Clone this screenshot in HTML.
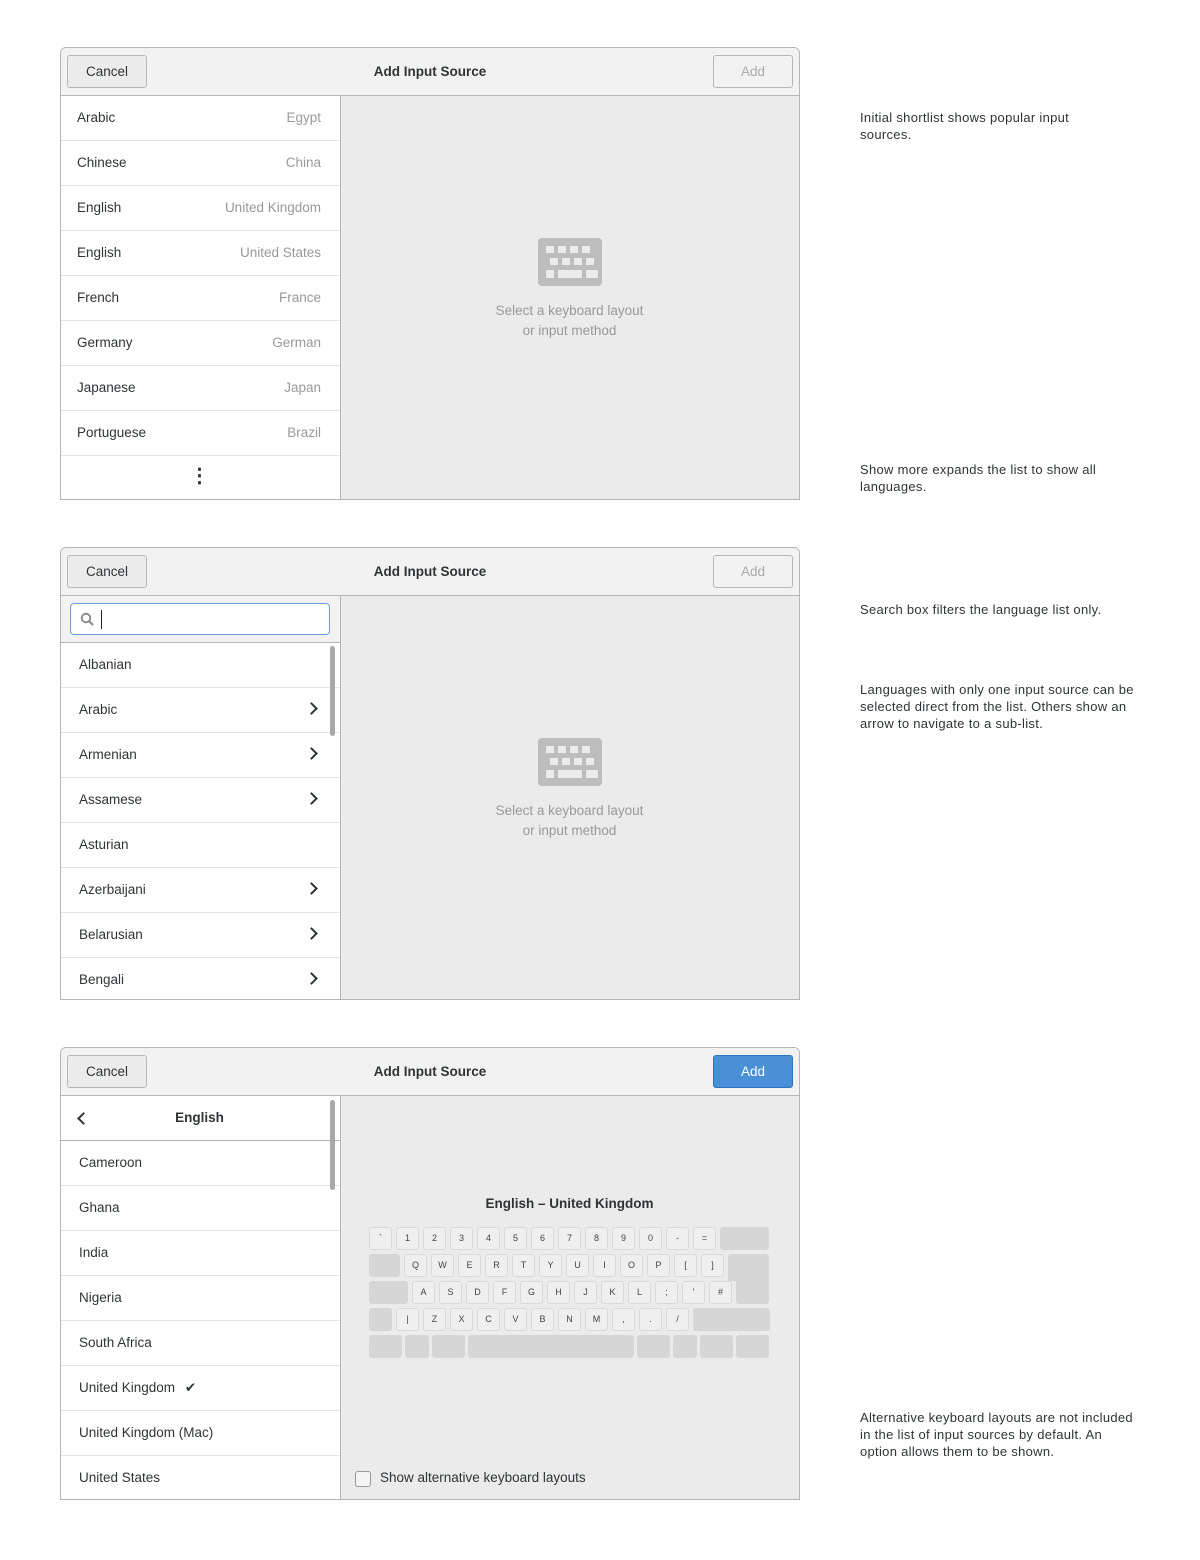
<!DOCTYPE html>
<html><head><meta charset="utf-8"><style>
*{box-sizing:border-box;margin:0;padding:0}
body{width:1200px;height:1560px;background:#fff;font-family:"Liberation Sans",sans-serif;font-size:13.5px;color:#2e3436;position:relative;overflow:hidden}
.dlg{position:absolute;left:60px;width:740px;height:453px;border:1px solid #b6b6b6;border-radius:6px 6px 0 0;overflow:hidden;background:#ebebeb}
.hdr{position:absolute;left:0;top:0;width:100%;height:48px;background:#f2f2f2;border-bottom:1px solid #b6b6b6}
.btn{position:absolute;top:7px;height:33px;width:80px;border:1px solid #b6b6b6;border-radius:3px;background:#ececec;text-align:center;line-height:31px;font-size:13.5px}
.title{position:absolute;left:0;right:0;top:0;line-height:47px;text-align:center;font-weight:bold;font-size:13.5px;padding-right:0}
.left{position:absolute;left:0;top:48px;width:280px;bottom:0;background:#fff;border-right:1px solid #b6b6b6}
.row{height:45px;border-bottom:1px solid #e3e3e3;line-height:44px;padding:0 18px 0 16px;position:relative}
.row .r{position:absolute;right:19px;top:0;color:#999}
.ph{position:absolute;left:279px;right:0;top:48px;bottom:0;text-align:center;color:#999}
.chev{position:absolute;right:24px;top:16px;width:9px;height:9px;border-right:2px solid #2e3436;border-top:2px solid #2e3436;transform:rotate(45deg)}
.sb{position:absolute;left:269px;width:5px;background:#a8a8a8;border-radius:3px}
.note{position:absolute;left:860px;white-space:nowrap;font-size:13px;line-height:17px;letter-spacing:0.3px}
.kb{position:absolute}
.k{position:absolute;height:23px;border:1px solid #d9d9d9;border-radius:3px;background:#efefef;font-size:9px;text-align:center;line-height:21px;color:#444}
.m{background:#d6d6d6;border-color:#d6d6d6}
</style></head><body>

<div class="dlg" style="top:47px">
 <div class="hdr"><div class="title">Add Input Source</div><div class="btn" style="left:6px">Cancel</div><div class="btn" style="left:652px;color:#aaa;background:#f2f2f2">Add</div></div>
 <div class="left">
  <div class="row">Arabic<span class="r">Egypt</span></div>
  <div class="row">Chinese<span class="r">China</span></div>
  <div class="row">English<span class="r">United Kingdom</span></div>
  <div class="row">English<span class="r">United States</span></div>
  <div class="row">French<span class="r">France</span></div>
  <div class="row">Germany<span class="r">German</span></div>
  <div class="row">Japanese<span class="r">Japan</span></div>
  <div class="row">Portuguese<span class="r">Brazil</span></div>
  <div class="row" style="border:0;text-align:center;font-weight:bold;font-size:20px;line-height:40px">&#8942;</div>
 </div>
 <div class="ph"><svg style="position:absolute;left:198px;top:142px" width="64" height="48" viewBox="0 0 64 48"><rect width="64" height="48" rx="4" fill="#bdbdbd"/><g fill="#ebebeb"><rect x="8" y="8" width="8" height="7"/><rect x="20" y="8" width="8" height="7"/><rect x="32" y="8" width="8" height="7"/><rect x="44" y="8" width="8" height="7"/><rect x="12" y="20" width="8" height="7"/><rect x="24" y="20" width="8" height="7"/><rect x="36" y="20" width="8" height="7"/><rect x="48" y="20" width="8" height="7"/><rect x="8" y="32" width="8" height="8"/><rect x="20" y="32" width="24" height="8"/><rect x="48" y="32" width="12" height="8"/></g></svg>
 <div style="position:absolute;left:0;right:0;top:205px;line-height:20px">Select a keyboard layout<br>or input method</div></div>
</div>

<div class="dlg" style="top:547px">
 <div class="hdr"><div class="title">Add Input Source</div><div class="btn" style="left:6px">Cancel</div><div class="btn" style="left:652px;color:#aaa;background:#f2f2f2">Add</div></div>
 <div class="left">
  <div style="height:47px;background:#f2f2f2;border-bottom:1px solid #b6b6b6;position:relative">
   <div style="position:absolute;left:9px;top:7px;width:260px;height:32px;border:1px solid #6a9fd6;border-radius:4px;background:#fff">
    <svg style="position:absolute;left:9px;top:8px" width="15" height="15" viewBox="0 0 15 15"><circle cx="6" cy="6" r="4.3" fill="none" stroke="#888" stroke-width="1.8"/><path d="M9 9l4 4" stroke="#888" stroke-width="2"/></svg>
    <div style="position:absolute;left:30px;top:6px;width:1px;height:19px;background:#222"></div>
   </div>
  </div>
  <div class="row" style="padding-left:18px">Albanian</div>
  <div class="row" style="padding-left:18px">Arabic<span class="chev"></span></div>
  <div class="row" style="padding-left:18px">Armenian<span class="chev"></span></div>
  <div class="row" style="padding-left:18px">Assamese<span class="chev"></span></div>
  <div class="row" style="padding-left:18px">Asturian</div>
  <div class="row" style="padding-left:18px">Azerbaijani<span class="chev"></span></div>
  <div class="row" style="padding-left:18px">Belarusian<span class="chev"></span></div>
  <div class="row" style="padding-left:18px;border:0">Bengali<span class="chev"></span></div>
  <div class="sb" style="top:50px;height:90px"></div>
 </div>
 <div class="ph"><svg style="position:absolute;left:198px;top:142px" width="64" height="48" viewBox="0 0 64 48"><rect width="64" height="48" rx="4" fill="#bdbdbd"/><g fill="#ebebeb"><rect x="8" y="8" width="8" height="7"/><rect x="20" y="8" width="8" height="7"/><rect x="32" y="8" width="8" height="7"/><rect x="44" y="8" width="8" height="7"/><rect x="12" y="20" width="8" height="7"/><rect x="24" y="20" width="8" height="7"/><rect x="36" y="20" width="8" height="7"/><rect x="48" y="20" width="8" height="7"/><rect x="8" y="32" width="8" height="8"/><rect x="20" y="32" width="24" height="8"/><rect x="48" y="32" width="12" height="8"/></g></svg>
 <div style="position:absolute;left:0;right:0;top:205px;line-height:20px">Select a keyboard layout<br>or input method</div></div>
</div>

<div class="dlg" style="top:1047px">
 <div class="hdr"><div class="title">Add Input Source</div><div class="btn" style="left:6px">Cancel</div><div class="btn" style="left:652px;background:#4a90d9;border-color:#2f74c0;color:#fff">Add</div></div>
 <div class="left">
  <div class="row" style="height:45px;border-bottom:1px solid #b6b6b6;text-align:center;font-weight:bold"><span style="position:absolute;left:18px;top:18px;width:9px;height:9px;border-left:2px solid #2e3436;border-bottom:2px solid #2e3436;transform:rotate(45deg)"></span>English</div>
  <div class="row" style="padding-left:18px">Cameroon</div>
  <div class="row" style="padding-left:18px">Ghana</div>
  <div class="row" style="padding-left:18px">India</div>
  <div class="row" style="padding-left:18px">Nigeria</div>
  <div class="row" style="padding-left:18px">South Africa</div>
  <div class="row" style="padding-left:18px">United Kingdom <span style="margin-left:6px">&#10004;</span></div>
  <div class="row" style="padding-left:18px">United Kingdom (Mac)</div>
  <div class="row" style="padding-left:18px;border:0">United States</div>
  <div class="sb" style="top:4px;height:90px"></div>
 </div>
 <div class="ph" style="color:#2e3436">
  <div style="position:absolute;left:0;right:0;top:100px;font-weight:bold">English – United Kingdom</div>
  <div style="position:absolute;left:15px;top:375px;width:16px;height:16px;border:1px solid #999;border-radius:3px;background:#f5f5f5"></div>
  <div style="position:absolute;left:40px;top:374px">Show alternative keyboard layouts</div>
 </div>
</div>

<div class="kb" style="left:0;top:0">
<div class="k" style="left:369px;top:1227px;width:23px">`</div><div class="k" style="left:396px;top:1227px;width:23px">1</div><div class="k" style="left:423px;top:1227px;width:23px">2</div><div class="k" style="left:450px;top:1227px;width:23px">3</div><div class="k" style="left:477px;top:1227px;width:23px">4</div><div class="k" style="left:504px;top:1227px;width:23px">5</div><div class="k" style="left:531px;top:1227px;width:23px">6</div><div class="k" style="left:558px;top:1227px;width:23px">7</div><div class="k" style="left:585px;top:1227px;width:23px">8</div><div class="k" style="left:612px;top:1227px;width:23px">9</div><div class="k" style="left:639px;top:1227px;width:23px">0</div><div class="k" style="left:666px;top:1227px;width:23px">-</div><div class="k" style="left:693px;top:1227px;width:23px">=</div><div class="k m" style="left:720px;top:1227px;width:49px"></div>
<div class="k m" style="left:369px;top:1254px;width:31px"></div>
<div class="k" style="left:404px;top:1254px;width:23px">Q</div><div class="k" style="left:431px;top:1254px;width:23px">W</div><div class="k" style="left:458px;top:1254px;width:23px">E</div><div class="k" style="left:485px;top:1254px;width:23px">R</div><div class="k" style="left:512px;top:1254px;width:23px">T</div><div class="k" style="left:539px;top:1254px;width:23px">Y</div><div class="k" style="left:566px;top:1254px;width:23px">U</div><div class="k" style="left:593px;top:1254px;width:23px">I</div><div class="k" style="left:620px;top:1254px;width:23px">O</div><div class="k" style="left:647px;top:1254px;width:23px">P</div><div class="k" style="left:674px;top:1254px;width:23px">[</div><div class="k" style="left:701px;top:1254px;width:23px">]</div>
<div class="k m" style="left:728px;top:1254px;width:41px;height:27px;border-radius:3px 3px 0 0"></div>
<div class="k m" style="left:736px;top:1278px;width:33px;height:26px;border-radius:0 0 3px 3px"></div>
<div class="k m" style="left:369px;top:1281px;width:39px"></div>
<div class="k" style="left:412px;top:1281px;width:23px">A</div><div class="k" style="left:439px;top:1281px;width:23px">S</div><div class="k" style="left:466px;top:1281px;width:23px">D</div><div class="k" style="left:493px;top:1281px;width:23px">F</div><div class="k" style="left:520px;top:1281px;width:23px">G</div><div class="k" style="left:547px;top:1281px;width:23px">H</div><div class="k" style="left:574px;top:1281px;width:23px">J</div><div class="k" style="left:601px;top:1281px;width:23px">K</div><div class="k" style="left:628px;top:1281px;width:23px">L</div><div class="k" style="left:655px;top:1281px;width:23px">;</div><div class="k" style="left:682px;top:1281px;width:23px">'</div><div class="k" style="left:709px;top:1281px;width:23px">#</div>
<div class="k m" style="left:369px;top:1308px;width:23px"></div>
<div class="k" style="left:396px;top:1308px;width:23px">|</div><div class="k" style="left:423px;top:1308px;width:23px">Z</div><div class="k" style="left:450px;top:1308px;width:23px">X</div><div class="k" style="left:477px;top:1308px;width:23px">C</div><div class="k" style="left:504px;top:1308px;width:23px">V</div><div class="k" style="left:531px;top:1308px;width:23px">B</div><div class="k" style="left:558px;top:1308px;width:23px">N</div><div class="k" style="left:585px;top:1308px;width:23px">M</div><div class="k" style="left:612px;top:1308px;width:23px">,</div><div class="k" style="left:639px;top:1308px;width:23px">.</div><div class="k" style="left:666px;top:1308px;width:23px">/</div>
<div class="k m" style="left:693px;top:1308px;width:77px"></div>
<div class="k m" style="left:369px;top:1335px;width:33px"></div><div class="k m" style="left:405px;top:1335px;width:24px"></div><div class="k m" style="left:432px;top:1335px;width:33px"></div><div class="k m" style="left:468px;top:1335px;width:166px"></div><div class="k m" style="left:637px;top:1335px;width:33px"></div><div class="k m" style="left:673px;top:1335px;width:24px"></div><div class="k m" style="left:700px;top:1335px;width:33px"></div><div class="k m" style="left:736px;top:1335px;width:33px"></div>
</div>

<div class="note" style="top:109px">Initial shortlist shows popular input<br>sources.</div>
<div class="note" style="top:461px">Show more expands the list to show all<br>languages.</div>
<div class="note" style="top:601px">Search box filters the language list only.</div>
<div class="note" style="top:681px">Languages with only one input source can be<br>selected direct from the list. Others show an<br>arrow to navigate to a sub-list.</div>
<div class="note" style="top:1409px">Alternative keyboard layouts are not included<br>in the list of input sources by default. An<br>option allows them to be shown.</div>
</body></html>
